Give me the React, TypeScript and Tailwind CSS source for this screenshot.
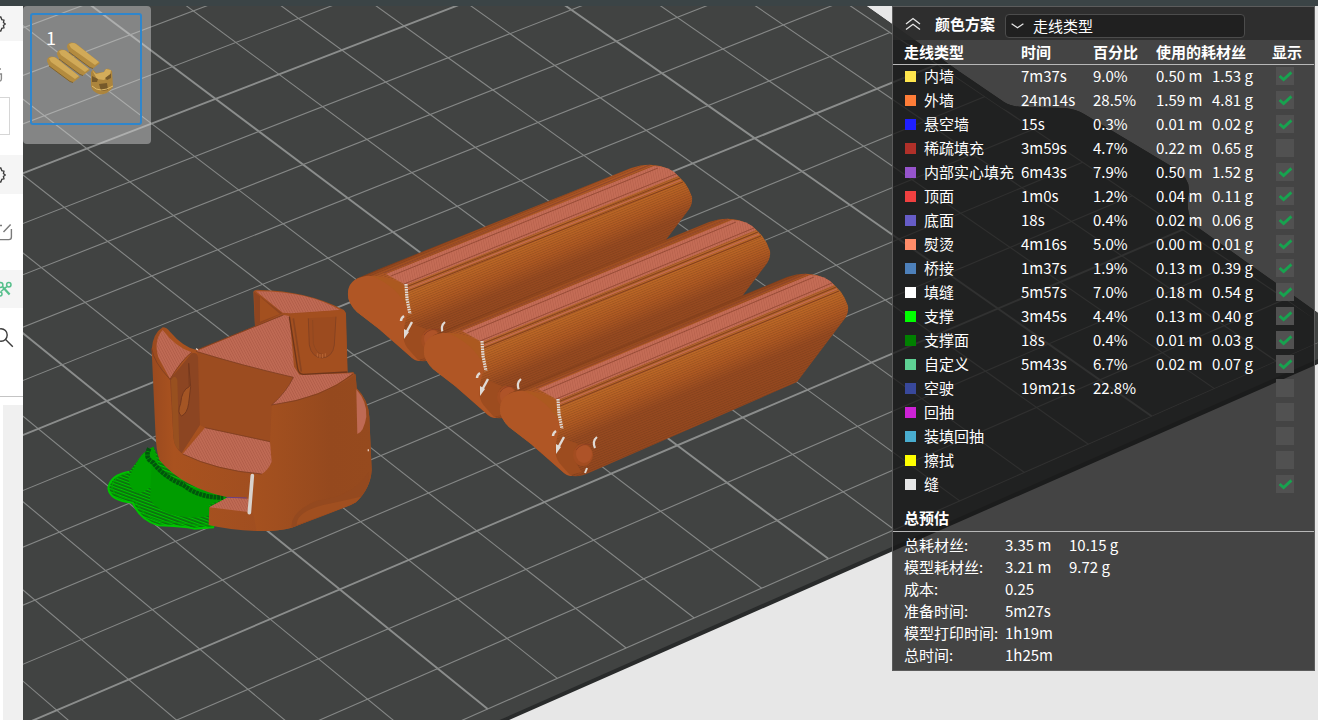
import React from "react";

type Point = [number, number];

/* ---------- data ---------- */

type LineType = {
  name: string;
  swatch: string;
  time?: string;
  percent?: string;
  meters?: string;
  grams?: string;
  shown: boolean;
};

const lineTypes: LineType[] = [
  { name: "内墙", swatch: "bg-[#ffe64d]", time: "7m37s", percent: "9.0%", meters: "0.50 m", grams: "1.53 g", shown: true },
  { name: "外墙", swatch: "bg-[#ff7d38]", time: "24m14s", percent: "28.5%", meters: "1.59 m", grams: "4.81 g", shown: true },
  { name: "悬空墙", swatch: "bg-[#1f1fff]", time: "15s", percent: "0.3%", meters: "0.01 m", grams: "0.02 g", shown: true },
  { name: "稀疏填充", swatch: "bg-[#b03029]", time: "3m59s", percent: "4.7%", meters: "0.22 m", grams: "0.65 g", shown: false },
  { name: "内部实心填充", swatch: "bg-[#9654cc]", time: "6m43s", percent: "7.9%", meters: "0.50 m", grams: "1.52 g", shown: true },
  { name: "顶面", swatch: "bg-[#f04040]", time: "1m0s", percent: "1.2%", meters: "0.04 m", grams: "0.11 g", shown: true },
  { name: "底面", swatch: "bg-[#665cc7]", time: "18s", percent: "0.4%", meters: "0.02 m", grams: "0.06 g", shown: true },
  { name: "熨烫", swatch: "bg-[#ff8c69]", time: "4m16s", percent: "5.0%", meters: "0.00 m", grams: "0.01 g", shown: true },
  { name: "桥接", swatch: "bg-[#4d80ba]", time: "1m37s", percent: "1.9%", meters: "0.13 m", grams: "0.39 g", shown: true },
  { name: "填缝", swatch: "bg-white", time: "5m57s", percent: "7.0%", meters: "0.18 m", grams: "0.54 g", shown: true },
  { name: "支撑", swatch: "bg-[#00ff00]", time: "3m45s", percent: "4.4%", meters: "0.13 m", grams: "0.40 g", shown: true },
  { name: "支撑面", swatch: "bg-[#008000]", time: "18s", percent: "0.4%", meters: "0.01 m", grams: "0.03 g", shown: true },
  { name: "自定义", swatch: "bg-[#5ed194]", time: "5m43s", percent: "6.7%", meters: "0.02 m", grams: "0.07 g", shown: true },
  { name: "空驶", swatch: "bg-[#38489b]", time: "19m21s", percent: "22.8%", shown: false },
  { name: "回抽", swatch: "bg-[#cd22d6]", shown: false },
  { name: "装填回抽", swatch: "bg-[#49adcf]", shown: false },
  { name: "擦拭", swatch: "bg-[#ffff00]", shown: false },
  { name: "缝", swatch: "bg-[#e6e6e6]", shown: true },
];

const totals: { label: string; value: string; extra?: string }[] = [
  { label: "总耗材丝:", value: "3.35 m", extra: "10.15 g" },
  { label: "模型耗材丝:", value: "3.21 m", extra: "9.72 g" },
  { label: "成本:", value: "0.25" },
  { label: "准备时间:", value: "5m27s" },
  { label: "模型打印时间:", value: "1h19m" },
  { label: "总时间:", value: "1h25m" },
];

/* ---------- build plate ---------- */

// Perspective map from plate cells to scene coordinates, anchored on four grid crossings.
const q00: Point = [106.7, 401];
const q10: Point = [754.8, 138.3];
const q11: Point = [1151.7, 416.3];
const q01: Point = [487.7, 709];
const sumX = q00[0] - q10[0] + q11[0] - q01[0];
const sumY = q00[1] - q10[1] + q11[1] - q01[1];
const dx1 = q10[0] - q11[0];
const dx2 = q01[0] - q11[0];
const dy1 = q10[1] - q11[1];
const dy2 = q01[1] - q11[1];
const det = dx1 * dy2 - dx2 * dy1;
const kg = (sumX * dy2 - dx2 * sumY) / det;
const kh = (dx1 * sumY - sumX * dy1) / det;

function project(u: number, v: number): Point {
  const s = u / 10;
  const t = (v - 5) / 8;
  const w = kg * s + kh * t + 1;
  const x = (q10[0] - q00[0] + kg * q10[0]) * s + (q01[0] - q00[0] + kh * q01[0]) * t + q00[0];
  const y = (q10[1] - q00[1] + kg * q10[1]) * s + (q01[1] - q00[1] + kh * q01[1]) * t + q00[1];
  return [x / w, y / w];
}

const range = (from: number, to: number) => Array.from({ length: to - from + 1 }, (_, i) => from + i);

function PlateGrid() {
  const line = (key: string, a: Point, b: Point, bold: boolean) => (
    <line
      key={key}
      x1={a[0]}
      y1={a[1]}
      x2={b[0]}
      y2={b[1]}
      stroke={bold ? "#8b8d8c" : "#858786"}
      strokeWidth={bold ? 1.9 : 1.1}
    />
  );
  return (
    <g clipPath="url(#plate)">
      {range(-10, 13).map((u) => line(`u${u}`, project(u, -7), project(u, 13), u % 5 === 0))}
      {range(-7, 13).map((v) => line(`v${v}`, project(-10, v), project(13, v), v % 5 === 0))}
    </g>
  );
}

/* ---------- printed models ---------- */

function Rod({ id, l, r }: { id: string; l: Point; r: Point }) {
  const L = (x: number, y: number) => `${l[0] + x} ${l[1] + y}`;
  const R = (x: number, y: number) => `${r[0] + x} ${r[1] + y}`;
  const body = `M${L(0, 0)} Q${L(-1, -9)} ${L(10, -17)} L${L(31, -26)} L${R(-61, -33)} Q${R(-38, -41)} ${R(-20, -30)} Q${R(-5, -20)} ${R(0, -4)} Q${R(1, 4)} ${R(-5, 11)} L${R(-51, 72)} L${L(91, 62)} Q${L(75, 70)} ${L(64, 63)} L${L(31, 34)} L${L(9, 17)} Q${L(0, 8)} ${L(0, 0)}Z`;
  const top = `M${L(38, -21)} L${L(58, -10)} L${R(-14, -25)} Q${R(-22, -35)} ${R(-38, -35)}Z`;
  return (
    <g>
      <defs>
        <linearGradient id={id} gradientUnits="userSpaceOnUse" x1={l[0] + 81} y1={l[1] - 47} x2={l[0] + 121} y2={l[1] + 49}>
          <stop offset="0" stopColor="#86401b" />
          <stop offset="0.06" stopColor="#ae5724" />
          <stop offset="0.25" stopColor="#b96830" />
          <stop offset="0.34" stopColor="#bd6826" />
          <stop offset="0.5" stopColor="#b05a22" />
          <stop offset="0.66" stopColor="#974a20" />
          <stop offset="1" stopColor="#94481f" />
        </linearGradient>
      </defs>
      <path d={body} fill={`url(#${id})`} />
      <path d={body} fill="url(#layers)" />
      <path d={top} fill="#c56d56" />
      <path d={top} fill="url(#ironing)" />
      <path d={`M${L(36, -22)} L${R(-42, -36)} M${L(43, -19)} L${R(-34, -33)} M${L(56, -11)} L${R(-16, -27)}`} stroke="#8e4530" strokeWidth="0.8" />
      <path d={`M${L(59, -6)} L${R(-11, -21)}`} stroke="#c46b53" strokeWidth="1.2" />
      <path d={`M${L(58, -8)} L${R(-12, -23)} M${L(60, -4)} L${R(-9, -19)}`} stroke="#7f3c1d" strokeWidth="0.9" />
      <path
        d={`M${L(0, 0)} Q${L(-1, -16)} ${L(18, -19)} Q${L(44, -20)} ${L(58, -8)} L${L(61, 16)} Q${L(52, 36)} ${L(60, 46)} L${L(72, 66)} Q${L(67, 66)} ${L(64, 63)} L${L(31, 34)} L${L(9, 17)} Q${L(0, 8)} ${L(0, 0)}Z`}
        fill="#b05625"
      />
      <path d={`M${L(24, -19)} Q${L(46, -18)} ${L(58, -8)} L${L(60, 14)} Q${L(50, -8)} ${L(24, -19)}Z`} fill="#ac5920" />
      <path d={`M${L(60, 27)} Q${L(50, 44)} ${L(62, 56)} L${L(70, 65)} L${L(82, 62)} Q${L(68, 44)} ${L(78, 34)}Z`} fill="#9d4c1f" />
      <ellipse cx={l[0] + 83} cy={l[1] + 45} rx="10" ry="11" fill="#a34d21" />
      <ellipse cx={l[0] + 84} cy={l[1] + 44} rx="8" ry="9" fill="#ae5328" />
      <path d={`M${L(76, 40)} Q${L(82, 32)} ${L(92, 35)}`} fill="none" stroke="#8d3f22" strokeWidth="0.8" />
      <g fill="none" stroke="#e0dbd6">
        <path d={`M${L(58, -11)} L${L(59, 4)} L${L(62, 19)}`} strokeWidth="3.2" strokeDasharray="1.6 0.9" />
        <path d={`M${L(56, 21)} Q${L(53, 23)} ${L(53, 26)}`} strokeWidth="2.4" />
        <path d={`M${L(64, 27)} L${L(58, 38)}`} strokeWidth="2.4" />
        <path d={`M${L(97, 27)} Q${L(92, 31)} ${L(95, 38)}`} strokeWidth="2.2" />
      </g>
      <path d={`M${L(56, 34)} L${L(61, 37)} L${L(56, 44)}Z`} fill="#e0dbd6" />
      <path d={`M${L(87, 58)} L${L(85, 63)}`} stroke="#e0dbd6" strokeWidth="2" />
    </g>
  );
}

function Cup() {
  return (
    <g transform="translate(90 270) scale(0.3333)">
      {/* support */}
      <path d="M190 530 Q160 545 145 570 L118 605 Q60 615 55 655 Q60 692 128 698 Q150 750 205 766 Q280 768 312 776 L372 772 L420 680 L205 560Z" fill="#008f00" />
      <path d="M190 530 Q160 545 145 570 L118 605 Q60 615 55 655 Q60 692 128 698 Q150 750 205 766 Q280 768 312 776 L372 772 L420 680 L205 560Z" fill="url(#support)" />
      <path d="M118 605 Q60 615 55 655 Q60 692 128 698 Q150 750 205 766 Q280 768 312 776 L372 772" fill="none" stroke="#00c400" strokeWidth="6" />
      <path d="M112 608 Q66 622 66 655 Q74 684 134 690 Q158 740 210 755 Q280 757 320 766 L360 764" fill="none" stroke="#00a800" strokeWidth="3" />
      <path d="M190 530 Q150 550 140 580 L115 625 Q120 665 150 670 Q185 655 190 640 L205 580Z" fill="#00a200" />
      <path d="M185 585 L180 690 Q215 735 290 742 Q340 745 358 735 L358 705 L410 680 L300 650Z" fill="#009c00" />
      <path d="M178 535 Q162 565 190 578 Q220 620 280 645 Q330 685 400 682" fill="none" stroke="#00560c" strokeWidth="14" strokeDasharray="9 2" />

      {/* body */}
      <path d="M490 65 Q495 58 510 60 Q650 62 762 120 L768 130 L773 308 L790 306 L797 318 L800 355 Q835 390 838 440 L845 600 Q842 655 798 697 Q770 712 605 773 Q560 785 500 783 Q420 780 356 765 L358 712 L414 682 Q280 655 208 570 Q198 540 196 480 L185 240 Q188 190 218 172 Q230 172 240 185 Q280 232 320 240 L495 168Z" fill="url(#cup)" />
      <path d="M545 405 Q700 385 797 312 L800 355 Q835 390 838 440 L845 600 Q842 655 798 697 L605 773 Q560 785 500 783 L490 730 L490 612 L515 612 Q545 590 545 570 L540 510Z" fill="url(#cupside)" />
      <path d="M605 773 Q600 725 680 692 Q790 680 836 606 Q842 655 798 697Z" fill="#94491f" />
      <path d="M620 765 Q620 725 700 705 Q770 690 812 680 Q800 700 770 710Z" fill="#a04f20" />

      {/* upper blocks and walls */}
      <path d="M492 65 L577 130 L495 167Z" fill="#8f4520" />
      <path d="M510 80 L570 132 L510 155Z" fill="#a3501f" />
      <path d="M322 246 L612 320 L545 405 L540 515 L345 473 L330 465Z" fill="#9c4c20" />
      <path d="M240 328 L305 250 Q322 245 324 262 L330 465 L275 550 Q252 530 250 500Z" fill="#8c4522" />
      <path d="M243 330 Q255 310 262 330 L268 540 Q252 530 250 500Z" fill="#98501f" />
      <path d="M296 280 L298 350 Q275 360 272 400 Q260 430 275 438 Q292 430 296 400 L302 350Z" fill="#a45524" stroke="#74381d" strokeWidth="3" />

      {/* ironed top surfaces */}
      <g fill="#bf6a54">
        <path d="M218 180 Q190 212 205 262 L240 326 Q275 270 305 247 Q255 230 218 180Z" />
        <path d="M318 244 L580 135 L598 138 L612 290 L628 314 L788 310 Q700 382 545 405 Q590 365 610 322 Q450 285 318 244Z" />
        <path d="M498 64 Q650 62 750 120 L602 130 L578 128Z" />
        <path d="M345 473 L540 515 L545 575 Q535 600 515 612 Q380 600 278 552Z" />
        <path d="M799 358 Q832 395 829 440 Q822 485 802 492Z" />
        <path d="M414 682 L475 686 L475 726 L358 712Z" />
      </g>
      <g fill="url(#hatch)">
        <path d="M218 180 Q190 212 205 262 L240 326 Q275 270 305 247 Q255 230 218 180Z" />
        <path d="M318 244 L580 135 L598 138 L612 290 L628 314 L788 310 Q700 382 545 405 Q590 365 610 322 Q450 285 318 244Z" />
        <path d="M498 64 Q650 62 750 120 L602 130 L578 128Z" />
        <path d="M345 473 L540 515 L545 575 Q535 600 515 612 Q380 600 278 552Z" />
        <path d="M414 682 L475 686 L475 726 L358 712Z" />
      </g>

      <path d="M598 140 Q605 130 620 131 L755 120 Q766 122 767 132 L772 306 L640 313 Q626 312 623 295Z" fill="#a34f1f" />
      <path d="M598 140 L623 295 Q626 312 640 313 L772 306" fill="none" stroke="#6f361b" strokeWidth="4" />
      <path d="M610 145 L634 305" stroke="#8a4420" strokeWidth="5" />
      <path d="M655 145 L658 225 Q665 262 696 264 Q728 262 733 225 L738 140" fill="#9c4b1f" stroke="#864221" strokeWidth="3" />
      <path d="M668 150 L670 220 Q678 250 696 252" fill="none" stroke="#904720" strokeWidth="3" />
      <path d="M682 250 v10 M690 252 v12 M698 252 v12 M706 250 v10" stroke="#bd6c3c" strokeWidth="2.5" />
      <g fill="none" stroke="#7d3d20" strokeWidth="2.5">
        <path d="M185 235 Q190 275 240 328 Q275 270 305 247" />
        <path d="M320 240 L580 135" />
        <path d="M545 405 Q700 385 790 312" />
        <path d="M545 405 Q590 365 610 322 Q450 285 318 244" />
        <path d="M345 473 L540 515 M278 552 Q380 602 515 612" />
      </g>
      <path d="M487 617 L478 728" stroke="#d8d2cd" strokeWidth="11" strokeLinecap="round" />
      <path d="M318 236 l6 4 M835 538 v6" stroke="#e8c8b8" strokeWidth="4" />
      <path d="M410 682 L470 684" stroke="#6a3f86" strokeWidth="3" />
    </g>
  );
}

function Scene() {
  return (
    <svg
      className="absolute inset-0 h-full w-full"
      viewBox="23 6 1295 714"
      preserveAspectRatio="xMinYMin slice"
      role="img"
      aria-label="切片预览"
    >
      <defs>
        <clipPath id="plate">
          <path d="M0 0 H848 L958 78 L1002 108 Q1010 113 1022 113 L1062 115 Q1072 116 1080 121 L1168 178 Q1180 186 1179 200 Q1176 218 1186 226 L1318 322 V343 L480 715 V720 H0Z" />
        </clipPath>
        <pattern id="layers" width="8" height="2.2" patternUnits="userSpaceOnUse" patternTransform="rotate(-22.5)">
          <path d="M0 0.5 H8" stroke="#5a2a10" strokeOpacity="0.3" strokeWidth="0.8" />
        </pattern>
        <pattern id="ironing" width="2.4" height="6" patternUnits="userSpaceOnUse" patternTransform="rotate(-12)">
          <path d="M0.5 0 V6" stroke="#9a4636" strokeOpacity="0.4" strokeWidth="0.7" />
        </pattern>
        <pattern id="hatch" width="7" height="7" patternUnits="userSpaceOnUse" patternTransform="rotate(-28)">
          <path d="M1 0 V7" stroke="#9c4a3a" strokeOpacity="0.55" strokeWidth="2" />
        </pattern>
        <pattern id="support" width="9" height="9" patternUnits="userSpaceOnUse" patternTransform="rotate(20)">
          <path d="M0 2 H9" stroke="#00c400" strokeWidth="3.5" />
          <path d="M0 6.5 H9" stroke="#145a18" strokeWidth="3" />
        </pattern>
        <linearGradient id="cup" x1="0" x2="1" y1="0" y2="0">
          <stop offset="0" stopColor="#9a4a1f" />
          <stop offset="0.1" stopColor="#a9521f" />
          <stop offset="0.5" stopColor="#a04e20" />
          <stop offset="1" stopColor="#a04e20" />
        </linearGradient>
        <linearGradient id="cupside" x1="0" x2="1" y1="0" y2="0">
          <stop offset="0" stopColor="#a5511f" />
          <stop offset="0.2" stopColor="#a14f1f" />
          <stop offset="0.65" stopColor="#95491e" />
          <stop offset="1" stopColor="#964a1e" />
        </linearGradient>
      </defs>
      <rect x="0" y="0" width="1318" height="720" fill="#e7e7e7" />
      <path d="M0 0 H858 L960 72 L1004 102 Q1012 107 1024 107 L1064 108 Q1076 109 1084 114 L1176 169 Q1190 178 1189 192 Q1185 210 1193 224 L1318 313 V364 L500 724 H0Z" fill="#292b2b" />
      <path d="M0 0 H858 L960 72 L1004 102 Q1012 107 1024 107 L1064 108 Q1076 109 1084 114 L1176 169 Q1190 178 1189 192 Q1185 210 1193 224 L1318 313 V359 L495 722 H0Z" fill="#414342" />
      <PlateGrid />
      <Cup />
      <Rod id="rod1" l={[348, 295]} r={[692, 201]} />
      <Rod id="rod2" l={[424, 352]} r={[770, 255]} />
      <Rod id="rod3" l={[500, 410]} r={[848, 310]} />
    </svg>
  );
}

/* ---------- left tool strip (only its right edge is in view) ---------- */

function GearEdge() {
  return (
    <svg width="6" height="16" viewBox="0 0 6 16" fill="none" stroke="#3c3c3c" strokeWidth="1.3" aria-hidden="true">
      <path d="M0 1 H0.8 L1.8 3.6 L4 4.2 L3.4 6.6 L5.2 8 L3.4 9.4 L4 11.8 L1.8 12.4 L0.8 15 H0" />
    </svg>
  );
}

function ToolStrip() {
  return (
    <aside className="flex w-[23px] shrink-0 flex-col overflow-hidden bg-white">
      <button type="button" aria-label="打印机设置" className="flex h-[35px] items-center bg-[#f5f5f5]">
        <GearEdge />
      </button>
      <div className="flex h-[56px] items-center pt-3">
        <svg width="3" height="14" viewBox="0 0 3 14" fill="none" stroke="#8a8a8a" strokeWidth="1.4" aria-hidden="true">
          <path d="M0 6 H1.4 V11 Q1.2 13 0 13 M0 1 H1" />
        </svg>
      </div>
      <div className="h-[38px] w-[10px] border border-l-0 border-[#d6d6d6]" />
      <button type="button" aria-label="耗材设置" className="mt-5 flex h-[39px] items-center bg-[#f5f5f5]">
        <GearEdge />
      </button>
      <button type="button" aria-label="编辑" className="flex h-[76px] items-center">
        <svg width="13" height="18" viewBox="0 0 13 18" fill="none" stroke="#7a7a7a" strokeWidth="1.4" aria-hidden="true">
          <path d="M3.5 9 L10.6 1.5 M11.4 6 V14 Q11.4 16.6 8.8 16.6 H0 M0 2.5 H2" />
        </svg>
      </button>
      <button type="button" aria-label="工艺" className="flex h-[38px] items-center bg-[#f5f5f5]">
        <svg width="13" height="18" viewBox="0 0 13 18" fill="none" stroke="#56bf8b" strokeWidth="1.5" aria-hidden="true">
          <circle cx="0.5" cy="5" r="2.4" />
          <circle cx="8.8" cy="4.8" r="2.2" />
          <circle cx="0" cy="14" r="2" />
          <path d="M6.8 6.6 L1 11.5" />
          <path d="M2.8 7 L9.6 14.4" strokeWidth="2.2" />
        </svg>
      </button>
      <button type="button" aria-label="搜索" className="flex h-[60px] items-center">
        <svg width="14" height="20" viewBox="0 0 14 20" fill="none" stroke="#3c3c3c" strokeWidth="1.4" aria-hidden="true">
          <circle cx="1" cy="7" r="6.2" />
          <path d="M5.6 11.6 L12.8 18.8" />
        </svg>
      </button>
      <div className="mt-[28px] h-[9px] border-t border-[#c4c4c4]" />
      <div className="ml-[3px] flex-1 bg-[#f0f0f0]" />
    </aside>
  );
}

/* ---------- overlays ---------- */

function PlateThumbnail() {
  return (
    <button type="button" aria-label="盘 1" className="relative h-[138px] w-[128px] rounded-[4px] bg-[#d8d8d8]/45 pt-[7px] pr-[9px] pb-[19px] pl-[7px]">
      <span className="block h-full rounded-[3px] border-2 border-[#2f86cc]">
        <svg className="block h-full w-full" viewBox="32 15 108 108" aria-hidden="true">
          {[
            [0, 0],
            [10, -7],
            [20, -14],
          ].map(([x, y]) => (
            <g key={x} transform={`translate(${x} ${y})`}>
              <path d="M47 61 Q47 56.5 52 56.5 L56 57.5 L80 77 L73 82.5 L69 81 L49 66Z" fill="#b38b3f" />
              <path d="M49 58.5 Q53 56 56 58 L79 76 L75 79 L51 62Z" fill="#d1aa58" />
              <path d="M49 66 L70 81.5 L73 82.5" stroke="#7d5f29" strokeWidth="0.9" fill="none" />
            </g>
          ))}
          <path d="M91 72 L93 69.5 L96 73 L104 72 L105 69.5 L108 68.5 L112 71 L113 87 Q108 94.5 100 94.5 Q92 92 91 86Z" fill="#ac853d" />
          <path d="M92 70 L96 74 L104 72 L106 69 L111 70 L110 75 L104 80 L97 79Z" fill="#d4ac5a" />
          <path d="M92 76 L98 79 L97 82 L92 82Z M105 78 L111 73.5 L111 78 L107 80Z M99 84 L107 83 L108 90 L101 91Z" fill="#76592a" />
          <path d="M92 86 Q100 94 113 86" stroke="#e0bb6a" strokeWidth="1" fill="none" />
        </svg>
      </span>
      <span className="absolute top-5 left-[23px] text-[18px] leading-[22px] text-white">1</span>
    </button>
  );
}

function VisibilityBox({ label, checked }: { label: string; checked: boolean }) {
  return (
    <label className="grid h-[18px] w-[18px]">
      <input
        type="checkbox"
        defaultChecked={checked}
        aria-label={`显示${label}`}
        className="peer col-start-1 row-start-1 h-[18px] w-[18px] appearance-none bg-[#515151]"
      />
      <svg className="pointer-events-none invisible col-start-1 row-start-1 peer-checked:visible" width="18" height="18" viewBox="0 0 18 18" fill="none" aria-hidden="true">
        <path d="M3.6 9 L7.6 12.6 L15.4 5.4" stroke="#17a34f" strokeWidth="2.8" />
      </svg>
    </label>
  );
}

function SlicePanel() {
  return (
    <section className="w-[423px] border border-[#5c5c5c] bg-[#181818]/79 pb-1 text-[15px] leading-[22px] text-white">
      <header className="flex h-[33px] items-center bg-[#2a2a2a]/85 pl-3">
        <button type="button" aria-label="收起" className="flex w-[30px]">
          <svg width="16" height="14" viewBox="0 0 16 14" fill="none" stroke="#e6e6e6" strokeWidth="1.3" aria-hidden="true">
            <path d="M1 7 L8 1.6 L15 7 M1 12.6 L8 7.2 L15 12.6" />
          </svg>
        </button>
        <label htmlFor="scheme" className="w-[70px] font-bold whitespace-nowrap">
          颜色方案
        </label>
        <div className="mt-1 grid w-[240px] items-center">
          <select
            id="scheme"
            defaultValue="line"
            className="col-start-1 row-start-1 h-6 appearance-none rounded-[4px] border border-[#4c4c4c] bg-[#202020] pl-[27px] text-[15px] leading-[20px] text-white"
          >
            <option value="line">走线类型</option>
          </select>
          <svg className="pointer-events-none col-start-1 row-start-1 ml-[6px]" width="13" height="6" viewBox="0 0 13 6" fill="none" stroke="#e6e6e6" strokeWidth="1.3" aria-hidden="true">
            <path d="M0.6 0.8 L6.5 4.8 L12.4 0.8" />
          </svg>
        </div>
      </header>

      <table className="w-full table-fixed border-collapse whitespace-nowrap">
        <colgroup>
          <col className="w-[128px]" />
          <col className="w-[72px]" />
          <col className="w-[63px]" />
          <col className="w-[56px]" />
          <col className="w-[60px]" />
          <col />
        </colgroup>
        <thead>
          <tr className="h-6 border-b border-[#b8b8b8] text-left">
            <th className="p-0 pl-[11px]">走线类型</th>
            <th className="p-0">时间</th>
            <th className="p-0">百分比</th>
            <th className="p-0" colSpan={2}>
              使用的耗材丝
            </th>
            <th className="p-0">显示</th>
          </tr>
        </thead>
        <tbody>
          {lineTypes.map((row) => (
            <tr key={row.name} className="h-6">
              <td className="p-0 pl-3">
                <span className="flex items-center gap-2">
                  <span className={`h-[11px] w-[11px] shrink-0 ${row.swatch}`} />
                  {row.name}
                </span>
              </td>
              <td className="p-0">{row.time}</td>
              <td className="p-0">{row.percent}</td>
              <td className="p-0">{row.meters}</td>
              <td className="p-0">{row.grams}</td>
              <td className="p-0 pl-1">
                <VisibilityBox label={row.name} checked={row.shown} />
              </td>
            </tr>
          ))}
        </tbody>
      </table>

      <h2 className="mt-[11px] border-b border-[#b8b8b8] pb-[2px] pl-[11px] font-bold">总预估</h2>
      <table className="mt-[2px] table-fixed border-collapse whitespace-nowrap">
        <colgroup>
          <col className="w-[112px]" />
          <col className="w-[64px]" />
          <col className="w-[80px]" />
        </colgroup>
        <tbody>
          {totals.map((row) => (
            <tr key={row.label} className="h-[22px]">
              <th className="p-0 pl-[11px] text-left font-normal" scope="row">
                {row.label}
              </th>
              <td className="p-0">{row.value}</td>
              <td className="p-0">{row.extra}</td>
            </tr>
          ))}
        </tbody>
      </table>
    </section>
  );
}

export default function App() {
  return (
    <div className="flex min-h-screen flex-col bg-[#e7e7e7] font-['Noto_Sans_CJK_SC',sans-serif]">
      <div className="h-[6px] bg-[#3b4446]" />
      <main className="flex flex-1">
        <ToolStrip />
        <div className="relative flex-1 overflow-hidden">
          <Scene />
          <div className="relative flex items-start justify-between pr-[3px]">
            <PlateThumbnail />
            <SlicePanel />
          </div>
        </div>
      </main>
    </div>
  );
}
